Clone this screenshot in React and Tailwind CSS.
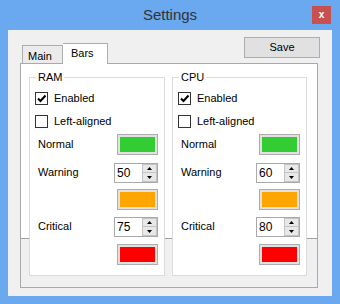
import React from 'react';

// Small Windows-style checkbox
const CheckBox = ({ checked, label }) => (
  <div className="flex items-center h-[13px] gap-[6px]">
    <div className="w-[13px] h-[13px] border border-[#333333] bg-white flex items-center justify-center">
      {checked && (
        <svg width="11" height="11" viewBox="0 0 11 11">
          <polyline points="2,5.5 4.5,8 9.5,2.5" fill="none" stroke="#000" strokeWidth="2" />
        </svg>
      )}
    </div>
    <span className="leading-[13px]">{label}</span>
  </div>
);

// Colour picker button
const Swatch = ({ color }) => (
  <div className="w-[41px] h-[21px] border border-[#adadad] bg-[#e1e1e1] p-[2px]">
    <div className="w-full h-full" style={{ backgroundColor: color }}></div>
  </div>
);

// NumericUpDown
const Spinner = ({ value }) => (
  <div className="w-[44px] h-[20px] border border-[#a9a9a9] bg-white flex">
    <span className="flex-1 pl-[2px] text-[12px] leading-[18px]">{value}</span>
    <div className="w-[15px] flex flex-col">
      <div className="h-[9px] bg-[#e8e8e8] border border-[#c4c4c4] flex items-center justify-center">
        <svg width="5" height="3" viewBox="0 0 5 3"><polygon points="2.5,0 5,3 0,3" fill="#000" /></svg>
      </div>
      <div className="h-[9px] bg-[#e8e8e8] border border-t-0 border-[#c4c4c4] flex items-center justify-center">
        <svg width="5" height="3" viewBox="0 0 5 3"><polygon points="0,0 5,0 2.5,3" fill="#000" /></svg>
      </div>
    </div>
  </div>
);

const GroupBox = ({ title, width, normal, warning, critical }) => (
  <div className={`${width} h-[199px] mt-[13px] border border-[#dcdcdc] bg-white flex flex-col pl-[5px] pr-[6px]`}>
    <span className="-mt-[7px] ml-[1px] px-[2px] w-fit bg-white leading-[13px]">{title}</span>
    <div className="mt-[8px]">
      <CheckBox checked label="Enabled" />
    </div>
    <div className="mt-[10px]">
      <CheckBox label="Left-aligned" />
    </div>
    <div className="mt-[6px] flex items-center justify-between h-[21px]">
      <span className="pl-[3px]">Normal</span>
      <Swatch color={normal} />
    </div>
    <div className="mt-[8px] flex items-center justify-between h-[20px]">
      <span className="pl-[3px] -mt-[2px]">Warning</span>
      <Spinner value={warning} />
    </div>
    <div className="mt-[6px] flex justify-end">
      <Swatch color="#ffa500" />
    </div>
    <div className="mt-[7px] flex items-center justify-between h-[20px]">
      <span className="pl-[3px] -mt-[2px]">Critical</span>
      <Spinner value={critical} />
    </div>
    <div className="mt-[7px] flex justify-end">
      <Swatch color="#ff0000" />
    </div>
  </div>
);

export default function App() {
  return (
    <div className="w-[340px] h-[304px] bg-[#6aa9f0] flex flex-col text-[11px] text-black font-['Liberation_Sans',Arial,sans-serif]">
      {/* Title bar */}
      <div className="h-[30px] grid grid-cols-[1fr_auto_1fr]">
        <div></div>
        <div className="text-[15px] text-[#333333] leading-[30px]">Settings</div>
        <div className="flex justify-end pr-[9px] pt-[6px]">
          <div className="w-[19px] h-[18px] bg-[#c75050] flex items-center justify-center text-white font-bold text-[10px] leading-none">x</div>
        </div>
      </div>

      {/* Client area */}
      <div className="mx-[8px] mb-[8px] flex-1 bg-[#f0f0f0] flex flex-col px-[12px]">
        <div className="h-[33px] flex justify-between items-start">
          <div className="h-full flex items-end pl-[2px]">
            <div className="h-[18px] w-[41px] border border-b-0 border-[#adadad] bg-[#ebebeb] pl-[5px] leading-[18px] pt-[1px]">Main</div>
            <div className="h-[21px] w-[45px] border border-b-0 border-l-0 border-[#adadad] bg-white pl-[8px] leading-[18px] -mb-[1px] relative z-10">Bars</div>
          </div>
          <div className="mt-[7px] w-[76px] h-[21px] border border-[#adadad] bg-[#e1e1e1] flex items-center justify-center">Save</div>
        </div>

        {/* Tab page */}
        <div className="mr-[2px] h-[225px] border border-[#a9a9a9] bg-[linear-gradient(to_bottom,#ffffff_0,#ffffff_174px,#a0a0a0_174px,#a0a0a0_175px,#f0f0f0_175px)] flex gap-[7px] pl-[8px]">
          <GroupBox title="RAM" width="w-[136px]" normal="#32cd32" warning="50" critical="75" />
          <GroupBox title="CPU" width="w-[135px]" normal="#32cd32" warning="60" critical="80" />
        </div>
      </div>
    </div>
  );
}
